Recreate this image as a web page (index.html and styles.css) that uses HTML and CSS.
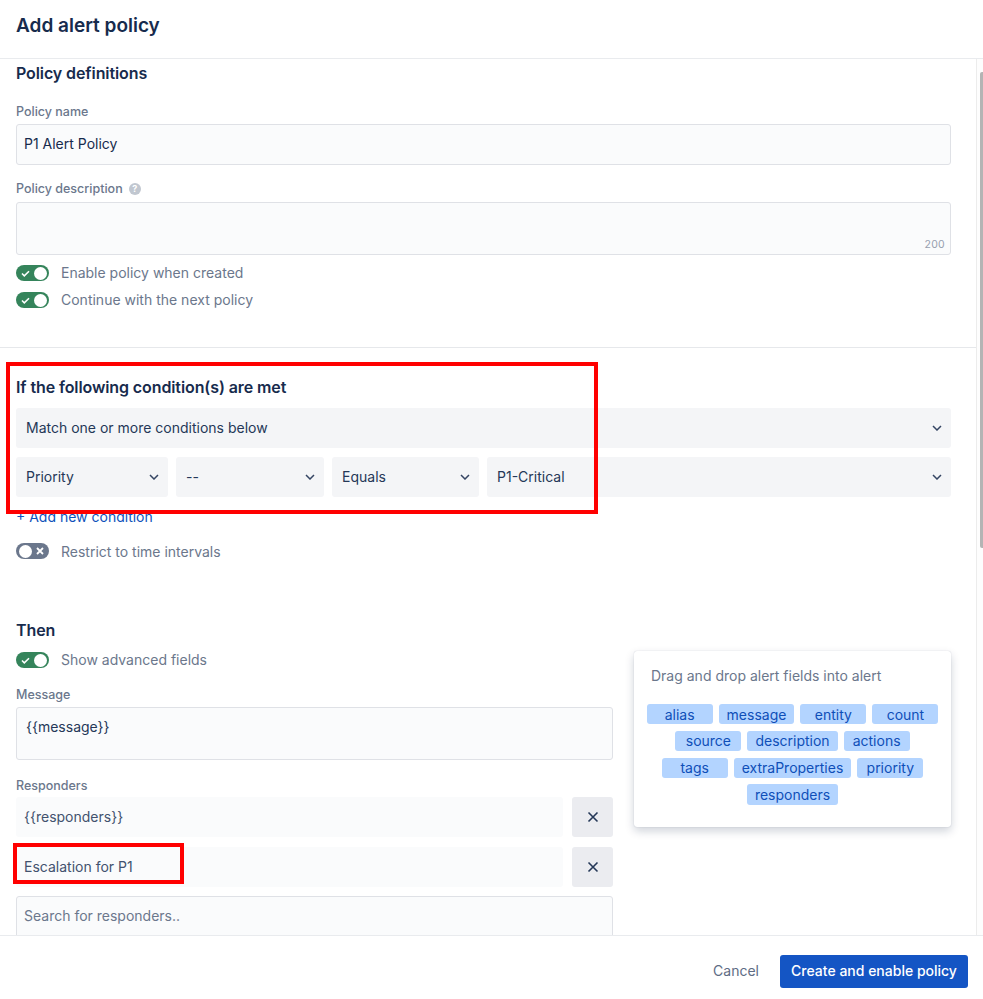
FILE: index.html
```html
<!DOCTYPE html>
<html lang="en">
<head>
<meta charset="utf-8">
<title>Add alert policy</title>
<link rel="stylesheet" href="styles.css">
</head>
<body>
<div class="page">
  <header class="top"><h1>Add alert policy</h1></header>
  <div class="middle">
    <main class="main">
      <section class="sec-def">
        <h2 class="h-def">Policy definitions</h2>
        <label class="label l-name">Policy name</label>
        <div class="input">P1 Alert Policy</div>
        <label class="label l-desc">Policy description <span class="help">?</span></label>
        <div class="area"><span class="count-limit">200</span></div>
        <div class="switch-row r-enable">
          <span class="toggle on"><svg class="tick" viewBox="0 0 10 8"><path d="M1 4l2.6 2.6L9 1.4" fill="none" stroke="#fff" stroke-width="1.8"/></svg><i class="knob"></i></span>Enable policy when created
        </div>
        <div class="switch-row r-next">
          <span class="toggle on"><svg class="tick" viewBox="0 0 10 8"><path d="M1 4l2.6 2.6L9 1.4" fill="none" stroke="#fff" stroke-width="1.8"/></svg><i class="knob"></i></span>Continue with the next policy
        </div>
      </section>
      <section class="sec-cond">
        <h2 class="h-cond">If the following condition(s) are met</h2>
        <div class="select full">Match one or more conditions below<svg class="chev" viewBox="0 0 10 6"><path d="M1 1l4 4 4-4" fill="none" stroke="#344563" stroke-width="1.5"/></svg></div>
        <div class="cond-row">
          <div class="select">Priority<svg class="chev" viewBox="0 0 10 6"><path d="M1 1l4 4 4-4" fill="none" stroke="#344563" stroke-width="1.5"/></svg></div>
          <div class="select">--<svg class="chev" viewBox="0 0 10 6"><path d="M1 1l4 4 4-4" fill="none" stroke="#344563" stroke-width="1.5"/></svg></div>
          <div class="select">Equals<svg class="chev" viewBox="0 0 10 6"><path d="M1 1l4 4 4-4" fill="none" stroke="#344563" stroke-width="1.5"/></svg></div>
          <div class="select">P1-Critical<svg class="chev" viewBox="0 0 10 6"><path d="M1 1l4 4 4-4" fill="none" stroke="#344563" stroke-width="1.5"/></svg></div>
        </div>
        <a class="add-link">+ Add new condition</a>
        <div class="switch-row r-restrict">
          <span class="toggle off"><i class="knob"></i><svg class="cross" viewBox="0 0 8 8"><path d="M1 1l6 6M7 1l-6 6" fill="none" stroke="#fff" stroke-width="1.8"/></svg></span>Restrict to time intervals
        </div>
      </section>
      <section class="sec-then">
        <div class="then-left">
          <h2 class="h-then">Then</h2>
          <div class="switch-row r-adv">
            <span class="toggle on"><svg class="tick" viewBox="0 0 10 8"><path d="M1 4l2.6 2.6L9 1.4" fill="none" stroke="#fff" stroke-width="1.8"/></svg><i class="knob"></i></span>Show advanced fields
          </div>
          <label class="label l-msg">Message</label>
          <div class="area msg">{{message}}</div>
          <label class="label l-resp">Responders</label>
          <div class="resp-row">
            <div class="resp">{{responders}}</div>
            <button class="x-btn" type="button"><svg viewBox="0 0 12 12"><path d="M1.5 1.5l9 9M10.5 1.5l-9 9" fill="none" stroke="#253858" stroke-width="1.6"/></svg></button>
          </div>
          <div class="resp-row second">
            <div class="resp">Escalation for P1</div>
            <button class="x-btn" type="button"><svg viewBox="0 0 12 12"><path d="M1.5 1.5l9 9M10.5 1.5l-9 9" fill="none" stroke="#253858" stroke-width="1.6"/></svg></button>
          </div>
          <div class="input search">Search for responders..</div>
        </div>
        <aside class="card">
          <p class="card-title">Drag and drop alert fields into alert</p>
          <div class="chips">
            <span class="chip">alias</span><span class="chip">message</span><span class="chip">entity</span><span class="chip">count</span>
            <span class="chip">source</span><span class="chip">description</span><span class="chip">actions</span>
            <span class="chip">tags</span><span class="chip">extraProperties</span><span class="chip">priority</span>
            <span class="chip">responders</span>
          </div>
        </aside>
      </section>
    </main>
    <div class="scrollbar"><div class="thumb"></div></div>
  </div>
  <footer class="bottom">
    <span class="cancel">Cancel</span>
    <button class="primary" type="button">Create and enable policy</button>
  </footer>
  <div class="mark mark-cond"></div>
  <div class="mark mark-esc"></div>
</div>
</body>
</html>
```
FILE: styles.css
```css
* { box-sizing: border-box; }
html, body { margin: 0; padding: 0; }
body { font-family: Inter, "Liberation Sans", sans-serif; color: #172b4d; background: #fff; }
.page { position: relative; width: 983px; height: 999px; display: flex; flex-direction: column; overflow: hidden; }

.top { height: 59px; flex: none; border-bottom: 1px solid #e9ebee; padding: 13px 16px 0; }
h1 { margin: 0; font-size: 19px; line-height: 25px; font-weight: 600; }
h2 { margin: 0; font-size: 16px; line-height: 20px; font-weight: 600; letter-spacing: -0.1px; }

.middle { flex: 1; min-height: 0; display: flex; }
.main { width: 976px; flex: none; overflow: hidden; }
.scrollbar { flex: 1; border-left: 1px solid #ececec; background: #fdfdfd; display: flex; justify-content: flex-end; }
.thumb { width: 3px; height: 476px; margin-top: 13px; background: #b4b4b4; border-radius: 2px 0 0 2px; }

.sec-def { height: 289px; padding: 4px 25px 0 16px; border-bottom: 1px solid #e6e8eb; }
.label { display: block; font-size: 12.5px; line-height: 16px; font-weight: 500; color: #6b778c; }
.l-name { margin-top: 21px; }
.input { height: 41px; margin-top: 4px; padding: 0 7px 2px; display: flex; align-items: center; background: #fafbfc; border: 1px solid #dfe1e6; border-radius: 3px; font-size: 14px; }
.l-desc { margin-top: 16px; display: flex; align-items: center; gap: 6px; }
.help { width: 12px; height: 12px; border-radius: 50%; background: #c1c7d0; color: #fff; font-size: 9px; line-height: 12px; font-weight: 700; text-align: center; }
.area { position: relative; height: 53px; margin-top: 5px; background: #fafbfc; border: 1px solid #dfe1e6; border-radius: 3px; }
.count-limit { position: absolute; right: 5px; bottom: 2px; font-size: 10.5px; line-height: 14px; color: #97a0af; letter-spacing: 0.3px; }

.switch-row { display: flex; align-items: center; gap: 12px; height: 20px; font-size: 14px; color: #6b778c; }
.r-enable { margin-top: 7px; }
.r-next { margin-top: 7px; }
.toggle { position: relative; flex: none; width: 33px; height: 16px; border-radius: 8px; display: flex; align-items: center; padding: 0 2px 0 3px; justify-content: space-between; }
.toggle.on { background: #35845b; margin-top: 2px; }
.toggle.off { background: #6b778c; }
.knob { width: 13px; height: 13px; border-radius: 50%; background: #fff; display: block; }
.tick { width: 9px; height: 7px; margin-left: 2px; }
.cross { width: 8px; height: 8px; margin-right: 3px; }

.sec-cond { height: 272px; padding: 29px 25px 0 16px; }
.select { position: relative; height: 40px; padding: 0 10px 2px; display: flex; align-items: center; background: #f4f5f7; border-radius: 3px; font-size: 14px; color: #253858; }
.select.full { margin-top: 11px; }
.cond-row { display: grid; grid-template-columns: 151.5px 147.5px 146.5px 1fr; gap: 8.5px; margin-top: 9px; }
.chev { position: absolute; right: 9px; top: 17px; width: 10px; height: 6px; }
.add-link { display: block; margin-top: 10px; font-size: 14px; line-height: 20px; color: #0f52ba; }
.r-restrict { margin-top: 14px; }

.sec-then { display: flex; gap: 21px; padding: 0 25px 0 16px; align-items: flex-start; }
.then-left { width: 597px; flex: none; }
.r-adv { margin-top: 9px; }
.l-msg { margin-top: 18px; }
.area.msg { margin-top: 4px; padding: 9px 9px; font-size: 14px; line-height: 20px; color: #253858; }
.l-resp { margin-top: 18px; }
.resp-row { display: flex; gap: 9px; margin-top: 3px; }
.resp-row.second { margin-top: 10px; }
.resp { flex: 1; height: 40px; padding: 0 8px 2px; display: flex; align-items: center; background: #fafbfc; border-radius: 3px; font-size: 14px; color: #42526e; }
.x-btn { width: 41px; height: 40px; padding: 0; border: 0; border-radius: 3px; background: #ebecf0; display: flex; align-items: center; justify-content: center; }
.x-btn svg { width: 12px; height: 12px; }
.search { height: 44px; margin-top: 9px; padding-bottom: 6px; color: #6b778c; }

.card { width: 317px; height: 176px; margin-top: 31px; padding: 16px 11px 0; background: #fff; border-radius: 3px; box-shadow: 0 4px 10px rgba(9, 30, 66, 0.2), 0 0 1px rgba(9, 30, 66, 0.25); }
.card-title { margin: 0 0 0 6px; font-size: 14px; line-height: 18px; color: #6b778c; }
.chips { display: flex; flex-wrap: wrap; justify-content: center; gap: 6.5px 6px; margin-top: 19px; }
.chip { min-width: 66px; height: 20.3px; padding: 0 8px; display: flex; align-items: center; justify-content: center; background: #b3d4ff; border-radius: 3px; font-size: 14px; color: #0f4fb8; }

.bottom { height: 64px; flex: none; border-top: 1px solid #e9ebee; display: flex; align-items: flex-start; justify-content: flex-end; gap: 21px; padding: 19px 15px 0 0; }
.cancel { margin-top: 6px; font-size: 14px; line-height: 20px; color: #5e6c84; }
.primary { width: 188px; height: 33px; padding: 0 0 2px; border: 0; border-radius: 3px; background: #1455c4; color: #fff; font-family: inherit; font-size: 14px; font-weight: 500; }

.mark { position: absolute; border: 4px solid #ff0000; pointer-events: none; }
.mark-cond { left: 6px; top: 362px; width: 592px; height: 152px; }
.mark-esc { left: 13px; top: 843px; width: 171px; height: 41px; }
```
